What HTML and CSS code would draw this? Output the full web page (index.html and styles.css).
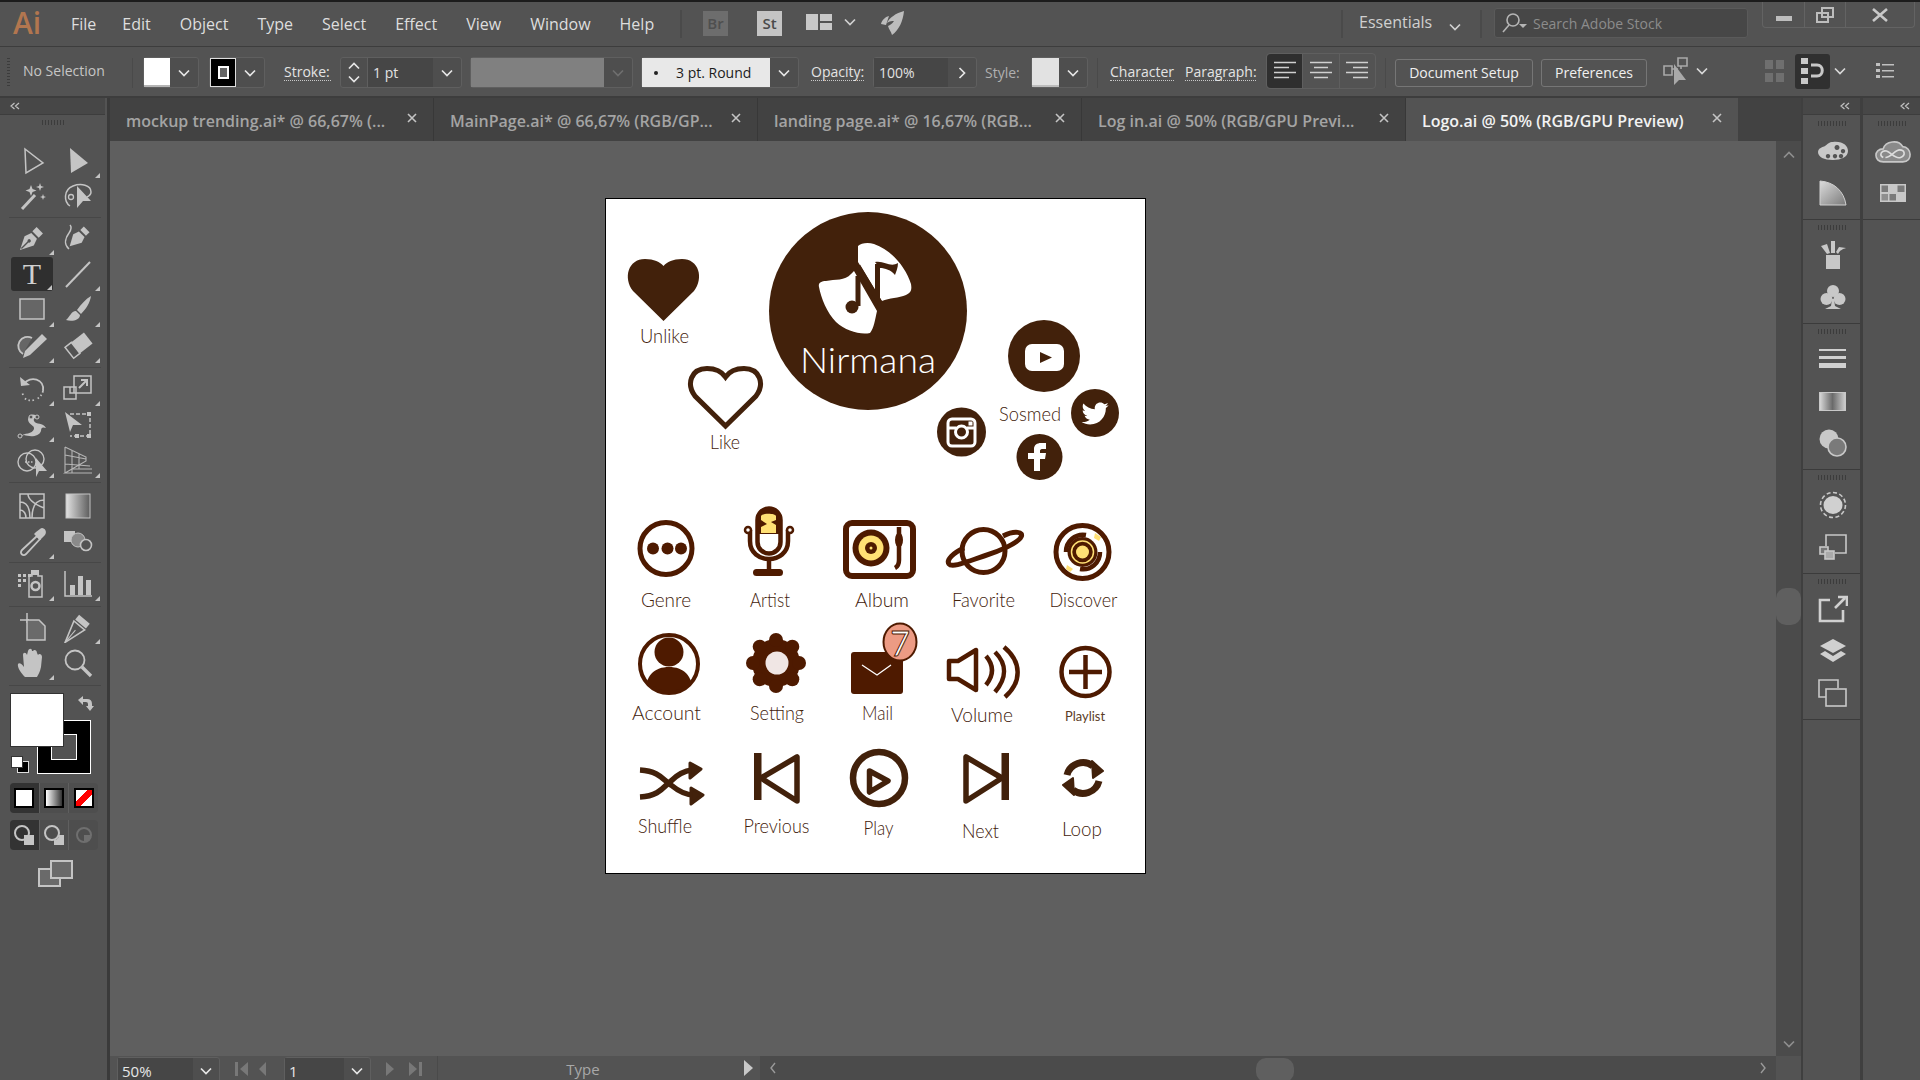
FILE: index.html

```html
<!DOCTYPE html>
<html>
  <head>
    <title>Adobe Illustrator - Logo.ai</title>
    <link rel="stylesheet" href="styles.css">
  </head>
  <body>
    <svg class="sprite">
      <symbol id="chev" viewBox="0 0 12 8"><polyline points="1,1.5 6,6.5 11,1.5" fill="none" stroke="currentColor" stroke-width="1.7"/></symbol>
      <symbol id="dbl" viewBox="0 0 10 8"><path d="M4.5 1 L1 4 L4.5 7 M9 1 L5.500 4 L9 7" fill="none" stroke="currentColor" stroke-width="1.2"/></symbol>
      <symbol id="close" viewBox="0 0 10 10"><path d="M1 1 L9 9 M9 1 L1 9" stroke="currentColor" stroke-width="1.6"/></symbol>
    </svg>

    <div class="topline"></div>

    <div class="menubar">
      <span class="ai-logo">Ai</span>
      <nav class="menu">
        <span>File</span><span>Edit</span><span>Object</span><span>Type</span><span>Select</span><span>Effect</span><span>View</span><span>Window</span><span>Help</span>
      </nav>
      <div class="vsep sep-a"></div>
      <span class="app-box br-box">Br</span>
      <span class="app-box st-box">St</span>
      <svg class="arrange-ic" width="26" height="16" viewBox="0 0 26 16"><path d="M0 0H12V16H0Z M14 0H26V7H14Z M14 9H26V16H14Z" fill="#c8c8c8"/></svg>
      <svg class="menu-chev" width="12" height="8"><use href="#chev"/></svg>
      <svg class="feather-ic" width="26" height="26" viewBox="0 0 26 26"><path d="M24 1 C16 3 9 8 7 13 C10 11 12 11 14 11 C12 14 10 15 8 16 C9 20 11 21 12 25 C19 20 23 11 24 1Z M6 15 L1 14 C2 10 5 7 9 6Z" fill="#bdbdbd"/></svg>
      <div class="vsep sep-b"></div>
      <span class="workspace-name">Essentials</span>
      <svg class="ws-chev" width="12" height="8"><use href="#chev"/></svg>
      <div class="vsep sep-c"></div>
      <div class="stock-search">
        <svg width="26" height="22" viewBox="0 0 26 22"><circle cx="11" cy="8" r="6" fill="none" stroke="#b5b5b5" stroke-width="1.6"/><path d="M7 13 L1 20" stroke="#b5b5b5" stroke-width="1.6"/><path d="M17 12H25L21 16Z" fill="#b5b5b5"/></svg>
        <span>Search Adobe Stock</span>
      </div>
      <div class="win-btns">
        <div class="win-btn"><svg class="win-min" width="16" height="6"><rect width="16" height="5" fill="#bdbdbd"/></svg></div>
        <div class="win-btn"><svg width="18" height="16" viewBox="0 0 18 16"><path d="M6 1H17V10H12V15H1V6H6Z M6 6H12V10H6Z" fill="none" stroke="#bdbdbd" stroke-width="2"/></svg></div>
        <div class="win-btn win-close"><svg width="16" height="14" viewBox="0 0 16 14"><path d="M1 1 L15 13 M15 1 L1 13" stroke="#c8c8c8" stroke-width="2.6"/></svg></div>
      </div>
    </div>

    <div class="controlbar">
      <div class="grip-v"></div>
      <span class="c-text no-sel">No Selection</span>
      <div class="vsep sep-1"></div>

      <div class="combo c-fill">
        <div class="swatch white"></div>
        <div class="chev-btn"><svg width="12" height="8"><use href="#chev"/></svg></div>
      </div>
      <div class="combo c-stroke">
        <div class="swatch black"><span class="stroke-mark"></span></div>
        <div class="chev-btn"><svg width="12" height="8"><use href="#chev"/></svg></div>
      </div>
      <span class="c-label l-stroke">Stroke:</span>
      <div class="combo c-weight">
        <div class="stepper"><svg width="12" height="8" class="flip"><use href="#chev"/></svg><svg width="12" height="8"><use href="#chev"/></svg></div>
        <div class="field">1 pt</div>
        <div class="chev-btn"><svg width="12" height="8"><use href="#chev"/></svg></div>
      </div>
      <div class="combo c-dash">
        <div class="swatch dash"></div>
        <div class="chev-btn dim"><svg width="12" height="8"><use href="#chev"/></svg></div>
      </div>
      <div class="combo c-cap">
        <div class="swatch cap"><span class="cap-dot"></span>3 pt. Round</div>
        <div class="chev-btn"><svg width="12" height="8"><use href="#chev"/></svg></div>
      </div>
      <span class="c-label l-opacity">Opacity:</span>
      <div class="combo c-opacity">
        <div class="field">100%</div>
        <div class="chev-btn"><svg width="8" height="12" viewBox="0 0 8 12"><polyline points="1.500,1 6.500,6 1.500,11" fill="none" stroke="currentColor" stroke-width="1.700"/></svg></div>
      </div>
      <span class="c-plain l-style">Style:</span>
      <div class="combo c-style">
        <div class="swatch style"></div>
        <div class="chev-btn"><svg width="12" height="8"><use href="#chev"/></svg></div>
      </div>
      <div class="vsep sep-2"></div>
      <span class="c-label l-char">Character</span>
      <span class="c-label l-para">Paragraph:</span>
      <div class="align-group">
        <div class="align-btn on"><svg width="24" height="20" viewBox="0 0 24 20"><path d="M1 1.500H23 M1 6.500H16 M1 11.500H23 M1 16.500H16" stroke="#d0d0d0" stroke-width="1.600"/></svg></div>
        <div class="align-btn"><svg width="24" height="20" viewBox="0 0 24 20"><path d="M1 1.500H23 M5 6.500H19 M1 11.500H23 M5 16.500H19" stroke="#d0d0d0" stroke-width="1.600"/></svg></div>
        <div class="align-btn"><svg width="24" height="20" viewBox="0 0 24 20"><path d="M1 1.500H23 M8 6.500H23 M1 11.500H23 M8 16.500H23" stroke="#d0d0d0" stroke-width="1.600"/></svg></div>
      </div>
      <div class="vsep sep-3"></div>
      <div class="text-btn b-doc">Document Setup</div>
      <div class="text-btn b-pref">Preferences</div>
      <svg class="isolate-ic" width="26" height="32" viewBox="0 0 26 32"><path d="M1 11H9V20H1Z M15 3H24V11H15Z M9 14H15 M18 11V14" fill="none" stroke="#a9a9a9" stroke-width="1.600"/><path d="M11 9 L11 30 L16 25 L23 25Z" fill="#a9a9a9"/></svg>
      <svg class="iso-chev" width="12" height="8"><use href="#chev"/></svg>
      <svg class="grid-ic" width="19" height="22" viewBox="0 0 19 22"><path d="M0 0H8V9H0Z M11 0H19V9H11Z M0 13H8V22H0Z M11 13H19V22H11Z" fill="#6f6f6f"/></svg>
      <div class="snap-btn"><svg width="24" height="26" viewBox="0 0 24 26"><path d="M0 0H7V6H0Z M0 10H7V16H0Z M0 20H7V26H0Z" fill="#c8c8c8"/><path d="M10 7H16C23 7 23 18 16 18H10" fill="none" stroke="#c8c8c8" stroke-width="3"/></svg></div>
      <svg class="snap-chev" width="12" height="8"><use href="#chev"/></svg>
      <svg class="list-ic" width="18" height="16" viewBox="0 0 18 16"><path d="M0 0H4V3H0Z M0 6H4V9H0Z M0 12H4V15H0Z M6 1H18V2.500H6Z M6 7H18V8.500H6Z M6 13H18V14.500H6Z" fill="#c0c0c0"/></svg>
    </div>

    <div class="workspace">
      <aside class="toolbar">
        <div class="dock-head"><svg width="10" height="8"><use href="#dbl"/></svg></div>
        <div class="grip"></div>

        <div class="tgroup g1">
          <div class="tool"><svg class="ic" width="32" height="32"><path d="M9 3 L27 17 L10 27Z" fill="none" stroke="#c4c4c4" stroke-width="1.500"/></svg></div>
          <div class="tool more"><svg class="ic" width="32" height="32"><path d="M8 2 L26 17 L9 27Z"/></svg></div>
          <div class="tool"><svg class="ic" width="32" height="32"><path d="M6 28 L19 14" stroke="#c4c4c4" stroke-width="3"/><path d="M15 4 L16.500 8 L20.500 9.500 L16.500 11 L15 15 L13.500 11 L9.500 9.500 L13.500 8Z M24 2 L25 5 L28 6 L25 7 L24 10 L23 7 L20 6 L23 5Z M27 13 L27.800 15.200 L30 16 L27.800 16.800 L27 19 L26.200 16.800 L24 16 L26.200 15.200Z"/></svg></div>
          <div class="tool"><svg class="ic" width="32" height="32"><path d="M8 25 C2 21 1 9 11 5 C19 2 29 4 29 11 C29 13 27 15 25 16" fill="none" stroke="#c4c4c4" stroke-width="1.500"/><circle cx="9" cy="16" r="2.500" fill="none" stroke="#c4c4c4" stroke-width="1.300"/><path d="M15 5 L29 20 L21 20 L15 27Z"/></svg></div>
        </div>

        <div class="tgroup g2">
          <div class="tool more"><svg class="ic" width="32" height="32"><g transform="rotate(45 16 16)"><path d="M16 33 L9.500 20 L12 13 H20 L22.500 20 Z"/><rect x="11.500" y="5" width="9" height="6"/><path d="M16 31 V21" stroke="#535353" stroke-width="1.400"/><circle cx="16" cy="20" r="1.700" fill="#535353"/></g></svg></div>
          <div class="tool"><svg class="ic" width="32" height="32"><g transform="rotate(45 19 13)"><path d="M19 29 L13 18 L15 12 H23 L25 18 Z"/><rect x="15" y="5" width="8" height="5"/></g><path d="M7 27 C1 22 4 15 7 11 C9 8 10 5 8 3" fill="none" stroke="#c4c4c4" stroke-width="1.500"/></svg></div>
          <div class="tool more active"><span class="type-t">T</span></div>
          <div class="tool more"><svg class="ic" width="32" height="32"><path d="M4 29 L28 4" stroke="#c4c4c4" stroke-width="2"/></svg></div>
          <div class="tool more"><svg class="ic" width="32" height="32"><rect x="4" y="5" width="24" height="20" fill="#666" stroke="#c4c4c4" stroke-width="1.500"/></svg></div>
          <div class="tool more"><svg class="ic" width="32" height="32"><path d="M29 2 C24 5 19 10 15 16 L19 20 C24 15 28 9 29 2Z M14 17 C9 17 8 23 4 26 C10 28 18 26 18 21Z"/></svg></div>
          <div class="tool more"><svg class="ic" width="32" height="32"><path d="M16 8 A9 9 0 1 0 7 24" fill="#666" stroke="#c4c4c4" stroke-width="1.800"/><path d="M26 4 L31 9 L14 25 L7 28 L9 21Z"/></svg></div>
          <div class="tool more"><svg class="ic" width="32" height="32"><g transform="rotate(-38 16 16)"><rect x="5" y="9" width="24" height="14"/><rect x="5" y="9" width="8" height="14" fill="#535353" stroke="#c4c4c4" stroke-width="1.500"/></g></svg></div>
        </div>

        <div class="tgroup g3">
          <div class="tool more"><svg class="ic" width="32" height="32"><path d="M8 11 C14 2 29 6 27 18" fill="none" stroke="#c4c4c4" stroke-width="1.800"/><path d="M27 18 C26 22 24 24 21 26 M18 27 C14 28 11 27 8 25 M7 22 L6 19" fill="none" stroke="#c4c4c4" stroke-width="1.800" stroke-dasharray="1.500 2.500"/><path d="M4 4 L5 13 L14 12Z"/></svg></div>
          <div class="tool more"><svg class="ic" width="32" height="32"><path d="M12 3H29V20H12Z M2 14H14V26H2Z M8 14V20H14" fill="none" stroke="#c4c4c4" stroke-width="1.500"/><path d="M17 15 L24 8 M19 7H25V13" fill="none" stroke="#c4c4c4" stroke-width="2"/></svg></div>
          <div class="tool more"><svg class="ic" width="32" height="32"><path d="M3 28 C9 23 16 26 18 20 C19 16 12 16 12 10 C13 5 18 4 22 8 C20 8 17 9 18 12 C20 16 27 13 30 19 C27 18 25 18 25 22 C23 28 14 28 8 26Z"/><circle cx="4" cy="27" r="2" fill="#535353" stroke="#c4c4c4"/><circle cx="15" cy="8" r="2" fill="#535353" stroke="#c4c4c4"/><circle cx="21" cy="8" r="2" fill="#535353" stroke="#c4c4c4"/></svg></div>
          <div class="tool"><svg class="ic" width="32" height="32"><path d="M8 5H28V27H8" fill="none" stroke="#c4c4c4" stroke-width="1.500" stroke-dasharray="4 2"/><path d="M3 3 L20 16 L11 16 L8 23 Z"/><rect x="25" y="3" width="4" height="4"/><rect x="25" y="25" width="4" height="4"/><rect x="13" y="25" width="4" height="4"/></svg></div>
          <div class="tool more"><svg class="ic" width="32" height="32"><circle cx="11" cy="17" r="9" fill="none" stroke="#c4c4c4" stroke-width="1.400"/><circle cx="19" cy="14" r="9" fill="none" stroke="#c4c4c4" stroke-width="1.400"/><path d="M9 17H17" stroke="#c4c4c4" stroke-width="1.400" stroke-dasharray="1.500 1.500"/><path d="M20 13 L31 26 L23 26 L20 32Z"/></svg></div>
          <div class="tool more"><svg class="ic" width="32" height="32"><path d="M3 2 L24 12 V16 L3 28 H30 M3 2V28 M3 10 L24 14 M3 19 L28 21 M10 5 V28 M17 9 V24 M10 24H30" fill="none" stroke="#b5b5b5" stroke-width="1.100"/></svg></div>
        </div>

        <div class="tgroup g4">
          <div class="tool"><svg class="ic" width="32" height="32"><path d="M4 4H28V28H4Z M4 12 C12 12 14 20 14 28 M28 10 C20 10 16 16 16 28 M12 4 C12 10 18 14 28 18 M4 20 C8 20 10 24 10 28" fill="none" stroke="#c4c4c4" stroke-width="1.500"/></svg></div>
          <div class="tool"><svg class="ic" width="32" height="32"><defs><linearGradient id="gTool"><stop offset="0" stop-color="#e2e2e2"/><stop offset="1" stop-color="#5c5c5c"/></linearGradient></defs><rect x="4" y="4" width="24" height="24" fill="url(#gTool)" stroke="#c4c4c4" stroke-width="1"/></svg></div>
          <div class="tool more"><svg class="ic" width="32" height="32"><path d="M21 10 L6 24 C3 27 7 31 10 28 L24 13Z" fill="none" stroke="#c4c4c4" stroke-width="1.800"/><path d="M20 6 L26 12 L29 9 C32 5 27 0 24 3Z M18 8 L24 14 L26 12 L20 6Z"/></svg></div>
          <div class="tool"><svg class="ic" width="32" height="32"><rect x="2" y="5" width="11" height="11"/><circle cx="16" cy="14" r="7" fill="#8a8a8a" stroke="#c4c4c4"/><circle cx="24" cy="19" r="5.500" fill="#535353" stroke="#c4c4c4" stroke-width="1.600"/></svg></div>
        </div>

        <div class="tgroup g5">
          <div class="tool more"><svg class="ic" width="32" height="32"><path d="M2 6H5V9H2Z M7 6H10V9H7Z M12 6H15V9H12Z M2 11H5V14H2Z M7 11H10V14H7Z M2 16H5V19H2Z"/><path d="M16 3H22V8H26V29H13V8H16Z" fill="none" stroke="#c4c4c4" stroke-width="1.500"/><rect x="15" y="2" width="8" height="5"/><circle cx="19.500" cy="18" r="4" fill="none" stroke="#c4c4c4" stroke-width="2.500"/></svg></div>
          <div class="tool more"><svg class="ic" width="32" height="32"><path d="M3 3V28H30" fill="none" stroke="#c4c4c4" stroke-width="1.500"/><path d="M8 17H13V27H8Z M16 8H21V27H16Z M24 12H29V27H24Z"/></svg></div>
        </div>

        <div class="tgroup g6">
          <div class="tool"><svg class="ic" width="32" height="32"><path d="M4 9H13 M11 2V12" stroke="#c4c4c4" stroke-width="1.500"/><path d="M11 9H23L29 15V29H11Z" fill="#6a6a6a" stroke="#c4c4c4" stroke-width="1.500"/></svg></div>
          <div class="tool more"><svg class="ic" width="32" height="32"><g transform="rotate(40 16 16)"><path d="M16 36 L9 14 H23Z" fill="none" stroke="#c4c4c4" stroke-width="1.600"/><path d="M9 6H23V12H9Z"/><path d="M16 36V20" stroke="#c4c4c4"/></g></svg></div>
          <div class="tool more"><svg class="ic" width="32" height="32"><path d="M9 30 C5 26 1 20 2 17 C3 15 6 17 8 20 L7 8 C7 5 10 5 11 8 L12 4 C13 1 16 1 16 4 L17 4 C18 2 21 3 21 6 L22 8 C23 6 26 7 26 10 L25 20 C24 25 22 28 21 30Z"/></svg></div>
          <div class="tool"><svg class="ic" width="32" height="32"><circle cx="13" cy="13" r="9.500" fill="none" stroke="#c4c4c4" stroke-width="1.800"/><path d="M20 20 L29 29" stroke="#c4c4c4" stroke-width="3.400"/></svg></div>
        </div>

        <div class="colors">
          <div class="stroke-big"><span></span></div>
          <div class="fill-big"></div>
          <svg class="swap-ic" width="17" height="17" viewBox="0 0 17 17"><path d="M1 5 L6 1 V4 H10 Q15 4 15 9 V11 H17 L13 16 L9 11 H11 V9 Q11 7 9 7 H6 V10Z" fill="#c4c4c4"/></svg>
          <div class="default-ic"><span></span><span></span></div>
        </div>

        <div class="mode-row">
          <div class="mode on"><span class="mode-sw solid"></span></div>
          <div class="mode"><span class="mode-sw grad"></span></div>
          <div class="mode"><span class="mode-sw none"></span></div>
        </div>
        <div class="mode-row">
          <div class="mode on"><svg width="22" height="22" viewBox="0 0 22 22"><circle cx="9" cy="9" r="7" fill="none" stroke="#c4c4c4" stroke-width="2"/><rect x="11" y="11" width="10" height="10" fill="#c4c4c4"/></svg></div>
          <div class="mode"><svg width="22" height="22" viewBox="0 0 22 22"><circle cx="9" cy="9" r="7" fill="none" stroke="#c4c4c4" stroke-width="2"/><path d="M21 11V21H11V16C14 16 16 14 16 11Z" fill="#c4c4c4"/></svg></div>
          <div class="mode"><svg width="22" height="22" viewBox="0 0 22 22"><circle cx="11" cy="11" r="7" fill="none" stroke="#6f6f6f" stroke-width="2"/><path d="M11 11H18A7 7 0 0 1 11 18Z" fill="#6f6f6f"/></svg></div>
        </div>
        <div class="screen-mode"><svg width="35" height="27" viewBox="0 0 35 27"><rect x="1" y="9" width="21" height="17" fill="#6a6a6a" stroke="#c4c4c4" stroke-width="2"/><rect x="13" y="1" width="21" height="17" fill="#6a6a6a" stroke="#c4c4c4" stroke-width="2"/></svg></div>
      </aside>

      <main class="docarea">
        <div class="tabs">
          <div class="tab"><span class="tab-name">mockup trending.ai* @ 66,67% (...</span><svg width="10" height="10"><use href="#close"/></svg></div>
          <div class="tab"><span class="tab-name">MainPage.ai* @ 66,67% (RGB/GP...</span><svg width="10" height="10"><use href="#close"/></svg></div>
          <div class="tab"><span class="tab-name">landing page.ai* @ 16,67% (RGB...</span><svg width="10" height="10"><use href="#close"/></svg></div>
          <div class="tab"><span class="tab-name">Log in.ai @ 50% (RGB/GPU Previ...</span><svg width="10" height="10"><use href="#close"/></svg></div>
          <div class="tab current"><span class="tab-name">Logo.ai @ 50% (RGB/GPU Preview)</span><svg width="10" height="10"><use href="#close"/></svg></div>
        </div>

        <div class="canvas-row">
          <div class="canvas">
            <svg class="artboard" width="541" height="676" viewBox="605 198 541 676">
              <!-- top: hearts and logo -->
              <g class="brown">
                <path d="M663.500 321 L633 291 C623 278 628 259 645 259 C654 259 660 262 663.500 266 C667 262 673 259 682 259 C699 259 704 278 694 291Z"/>
                <circle cx="868" cy="311" r="99"/>
                <circle cx="1044" cy="356" r="36"/>
                <circle cx="961.500" cy="432" r="24.500"/>
                <circle cx="1095" cy="413" r="24"/>
                <circle cx="1039.500" cy="457" r="23"/>
              </g>
              <path d="M725.500 426 L695 396 C686 384 691 368.500 707 368.500 C716 368.500 722 372 725.500 377 C729 372 735 368.500 744 368.500 C760 368.500 765 384 756 396Z" fill="none" stroke="#42210b" stroke-width="5"/>

              <path d="M858 246 C861 243 868 242 874 244 C892 250 906 268 911 284 C912 290 911 293 906 295 C899 298 889 298 882 301 L858 262Z M819 287 C818 283 821 281 826 281 C835 279 845 281 851 274 L854 271 L877 311 C875 320 874 328 870 333 C860 335 846 331 836 322 C827 313 821 298 819 287Z" fill="#fff"/>
              <path d="M858 266 L880 303 M858 276 V306 M877.500 300 V264" fill="none" stroke="#42210b" stroke-width="5"/>
              <path d="M875 262 C884 260 890 268 898 263 C898 268 896 272 895 275 C891 270 885 268 880 268Z" fill="#42210b"/>
              <circle cx="852" cy="307" r="6.500" fill="#42210b"/>
              <text class="logo-name" x="800" y="373" textLength="136" lengthAdjust="spacingAndGlyphs">Nirmana</text>

              <text class="lbl" x="640" y="343" textLength="49" lengthAdjust="spacingAndGlyphs">Unlike</text>
              <text class="lbl" x="710" y="449" textLength="30" lengthAdjust="spacingAndGlyphs">Like</text>
              <text class="lbl" x="999" y="421" textLength="62" lengthAdjust="spacingAndGlyphs">Sosmed</text>

              <!-- social icons -->
              <rect x="1025" y="344" width="39" height="27" rx="7" fill="#fff"/>
              <path d="M1040 352 L1052 357.500 L1040 363Z" fill="#42210b"/>
              <rect x="948" y="419" width="27" height="27" rx="4" fill="none" stroke="#fff" stroke-width="3"/>
              <path d="M948 428 H956 M967 428 H975" stroke="#fff" stroke-width="3"/>
              <circle cx="961.500" cy="432" r="6" fill="none" stroke="#fff" stroke-width="3"/>
              <rect x="968.500" y="421.500" width="4" height="4" fill="#fff"/>
              <path transform="translate(1081.600 400) scale(1.125)" fill="#fff" d="M23.954 4.569c-.885.389-1.830.654-2.825.775 1.014-.611 1.794-1.574 2.163-2.723-.951.555-2.005.959-3.127 1.184-.896-.959-2.173-1.559-3.591-1.559-2.717 0-4.920 2.203-4.920 4.917 0 .39.045.765.127 1.124C7.691 8.094 4.066 6.130 1.640 3.161c-.427.722-.666 1.561-.666 2.475 0 1.710.870 3.213 2.188 4.096-.807-.026-1.566-.248-2.228-.616v.061c0 2.385 1.693 4.374 3.946 4.827-.413.111-.849.171-1.296.171-.314 0-.615-.030-.916-.086.631 1.953 2.445 3.377 4.604 3.417-1.680 1.319-3.809 2.105-6.102 2.105-.390 0-.779-.023-1.170-.067 2.189 1.394 4.768 2.209 7.557 2.209 9.054 0 13.999-7.496 13.999-13.986 0-.209 0-.420-.015-.630.961-.689 1.800-1.560 2.460-2.548l-.047-.020z"/>
              <path d="M1034 471 V459 H1028 V453 H1034 V449 C1034 445 1037 443 1041 443 H1046 V449 H1042 C1040.500 449 1040 450 1040 451 V453 H1046 L1045 459 H1040 V471Z" fill="#fff"/>

              <!-- row 1 -->
              <g class="dark-stroke">
                <circle cx="666" cy="548.500" r="26"/>
                <rect x="846" y="523" width="67" height="53" rx="6" stroke-width="6"/>
                <circle cx="983.500" cy="551" r="21.500"/>
                <path d="M1003 536 C1015 530 1024 532 1021 537 C1018 543 1000 551 984 556 C966 562 952 568 949 564 C946 560 953 553 964 548" fill="none"/>
                <circle cx="1082.500" cy="552" r="26.500"/>
              </g>
              <g class="dark-fill">
                <circle cx="653" cy="548.500" r="6"/>
                <circle cx="667.500" cy="548.500" r="6"/>
                <circle cx="681" cy="548.500" r="6"/>
              </g>

              <!-- artist mic -->
              <rect x="757.500" y="508.500" width="23" height="45" rx="11.500" class="dark-line"/>
              <path d="M757 520 A12 12 0 0 1 781 520 V534 H757Z" fill="#4e1a00"/>
              <path d="M761 516 C762 513 775 513 776 516 V520 L771 522 L776 525 V533 H761 V527 L767 524 L761 520Z" fill="#ffe074"/>
              <path d="M750 530 V541 C750 565 788 565 788 541 V530" class="dark-line"/>
              <circle cx="748" cy="530" r="3" class="dark-thin"/>
              <circle cx="790" cy="530" r="3" class="dark-thin"/>
              <path d="M769 559 V572" class="dark-line"/>
              <rect x="753" y="569" width="30" height="7" rx="3.500" fill="#4e1a00"/>

              <!-- album -->
              <circle cx="871" cy="548" r="18.500" fill="#4e1a00"/>
              <circle cx="871" cy="548" r="12.500" fill="#ffe074"/>
              <circle cx="871" cy="548" r="6" fill="#4e1a00"/>
              <circle cx="871" cy="548" r="1.500" fill="#ffe074"/>
              <path d="M899 527 V560 Q899 566 895 568" class="dark-line"/>
              <ellipse cx="899" cy="540" rx="4" ry="7.500" fill="#4e1a00"/>

              <!-- discover -->
              <path d="M1066 552 A17 17 0 0 1 1086 535 M1100 552 A17 17 0 0 1 1080 569" class="dark-line"/>
              <circle cx="1082.500" cy="552" r="15" fill="#4e1a00"/>
              <circle cx="1082.500" cy="552" r="11" fill="#4e1a00" stroke="#ffe074" stroke-width="1.500"/>
              <circle cx="1082.500" cy="552" r="6.500" fill="#ffe074"/>
              <path d="M1095 533 L1101 537 L1099 541 L1094 538Z M1067 565 L1073 569 L1070 572 L1066 569Z" fill="#ffe074"/>

              <text class="lbl" x="641" y="607" textLength="50" lengthAdjust="spacingAndGlyphs">Genre</text>
              <text class="lbl" x="750" y="607" textLength="40" lengthAdjust="spacingAndGlyphs">Artist</text>
              <text class="lbl" x="855" y="607" textLength="54" lengthAdjust="spacingAndGlyphs">Album</text>
              <text class="lbl" x="952" y="607" textLength="63" lengthAdjust="spacingAndGlyphs">Favorite</text>
              <text class="lbl" x="1049.500" y="607" textLength="68" lengthAdjust="spacingAndGlyphs">Discover</text>

              <!-- row 2 -->
              <clipPath id="ringClip"><circle cx="669" cy="664" r="30"/></clipPath>
              <g clip-path="url(#ringClip)" class="dark-fill">
                <circle cx="669" cy="652" r="14.500"/>
                <path d="M645 698 C644 676 654 667 669 667 C684 667 694 676 693 698Z"/>
              </g>
              <circle cx="669" cy="664" r="29" fill="none" stroke="#4e1a00" stroke-width="4"/>

              <g class="dark-fill">
                <circle cx="776" cy="663" r="24"/>
                <circle cx="776" cy="640" r="7"/>
                <circle cx="776" cy="686" r="7"/>
                <circle cx="753" cy="663" r="7"/>
                <circle cx="799" cy="663" r="7"/>
                <circle cx="759.700" cy="646.700" r="7"/>
                <circle cx="792.300" cy="646.700" r="7"/>
                <circle cx="759.700" cy="679.300" r="7"/>
                <circle cx="792.300" cy="679.300" r="7"/>
              </g>
              <circle cx="777" cy="663" r="11.500" fill="#f0e6e4"/>

              <rect x="851" y="652" width="52" height="42" rx="3" fill="#4e1a00"/>
              <path d="M862 665 L877 675 L891 665" fill="none" stroke="#fff" stroke-width="1.300"/>
              <ellipse cx="900" cy="642" rx="16.500" ry="18.500" fill="#ec9b84" stroke="#4e1a00" stroke-width="2"/>
              <text class="badge-num" x="900" y="656">7</text>

              <path d="M949 661 H958 L976 650 V690 L958 679 H949Z" class="dark-line-w"/>
              <path d="M986 656 Q998 670 986 685 M995 652 C1007 664 1007 678 995 692 M1004 647 C1022 662 1022 682 1005 697" class="dark-line-w"/>

              <circle cx="1085.500" cy="672" r="24" class="dark-line"/>
              <path d="M1085.500 655 V689 M1069 672 H1102" class="dark-line"/>

              <text class="lbl" x="632" y="720" textLength="69" lengthAdjust="spacingAndGlyphs">Account</text>
              <text class="lbl" x="750" y="720" textLength="54" lengthAdjust="spacingAndGlyphs">Setting</text>
              <text class="lbl" x="862" y="720" textLength="31" lengthAdjust="spacingAndGlyphs">Mail</text>
              <text class="lbl" x="951" y="722" textLength="62" lengthAdjust="spacingAndGlyphs">Volume</text>
              <text class="lbl-small" x="1065" y="721" textLength="40" lengthAdjust="spacingAndGlyphs">Playlist</text>

              <!-- row 3 -->
              <g class="brown-line">
                <path d="M640 770 C660 771 664 781 671 785 C677 790 684 795 694 795"/>
                <path d="M640 797 C660 796 664 786 671 781 C677 775 683 771 692 770"/>
                <path d="M761 778 L797 757 V801Z"/>
                <circle cx="879" cy="778" r="26"/>
                <path d="M869.500 771 L888 781 L869.500 792Z"/>
                <path d="M1002 778 L966 757 V801Z"/>
                <path class="loop-arc" d="M1067 775 A16.500 16.500 0 0 1 1093 766"/>
                <path class="loop-arc" d="M1099 781 A16.500 16.500 0 0 1 1073 790"/>
              </g>
              <g class="brown">
                <path d="M690 763 L701 769 L690 778Z M691 788 L703 795 L691 804Z" stroke="#42210b" stroke-width="3" stroke-linejoin="round"/>
                <rect x="754" y="753" width="7.500" height="47"/>
                <rect x="1001.500" y="753" width="7.500" height="47"/>
                <path d="M1092 761 L1103 771 L1093 778Z M1074 795 L1063 785 L1073 778Z" stroke="#42210b" stroke-width="2" stroke-linejoin="round"/>
              </g>

              <text class="lbl" x="638" y="833" textLength="54" lengthAdjust="spacingAndGlyphs">Shuffle</text>
              <text class="lbl" x="743.500" y="833" textLength="66" lengthAdjust="spacingAndGlyphs">Previous</text>
              <text class="lbl" x="863.500" y="835" textLength="30" lengthAdjust="spacingAndGlyphs">Play</text>
              <text class="lbl" x="962" y="838" textLength="37" lengthAdjust="spacingAndGlyphs">Next</text>
              <text class="lbl" x="1062" y="836" textLength="40" lengthAdjust="spacingAndGlyphs">Loop</text>
            </svg>
          </div>
          <div class="vscroll">
            <svg width="12" height="8" class="flip"><use href="#chev"/></svg>
            <div class="vthumb"></div>
            <svg width="12" height="8" class="vdown"><use href="#chev"/></svg>
          </div>
        </div>

        <div class="statusbar">
          <div class="st-left">
            <div class="st-field st-zoom"><span>50%</span><svg width="12" height="8"><use href="#chev"/></svg></div>
            <svg class="st-nav" width="62" height="16" viewBox="0 0 62 16"><path d="M0 1H3V15H0Z M13 1V15L5 8Z M31 1V15L24 8Z" fill="#787878"/></svg>
            <div class="st-field st-page"><span>1</span><svg width="12" height="8"><use href="#chev"/></svg></div>
            <svg class="st-nav-r" width="38" height="16" viewBox="0 0 38 16"><path d="M0 1V15L8 8Z M23 1V15L31 8Z M33 1H36V15H33Z" fill="#787878"/></svg>
            <div class="st-info"><span>Type</span></div>
            <svg class="st-play" width="9" height="16" viewBox="0 0 9 16"><path d="M0 0V16L9 8Z" fill="#c8c8c8"/></svg>
          </div>
          <div class="hscroll">
            <svg width="6" height="12" viewBox="0 0 6 12"><polyline points="5,1 1,6 5,11" fill="none" stroke="#9a9a9a" stroke-width="1.400"/></svg>
            <div class="hthumb"></div>
            <svg width="6" height="12" viewBox="0 0 6 12"><polyline points="1,1 5,6 1,11" fill="none" stroke="#9a9a9a" stroke-width="1.400"/></svg>
          </div>
          <div class="st-corner"></div>
        </div>
      </main>

      <aside class="dock">
        <div class="dock-col">
          <div class="dock-head"><svg width="10" height="8"><use href="#dbl"/></svg></div>
          <div class="pgroup">
            <div class="pgrip"></div>
            <div class="panel-ic"><svg width="32" height="24" viewBox="0 0 32 24"><path fill-rule="evenodd" d="M16 3 C26 2 31 7 31 12 C31 18 24 21 16 21 C7 21 1 18 1 13 C1 9 6 8 8 7 C11 5 12 3 16 3Z M20 6a2.500 2.500 0 1 0 .01 0Z M26 10a2.200 2.200 0 1 0 .01 0Z M24 15a2.200 2.200 0 1 0 .01 0Z M18 15a2.200 2.200 0 1 0 .01 0Z M11 15a2.200 2.200 0 1 0 .01 0Z" fill="#c8c8c8"/></svg></div>
            <div class="panel-ic"><svg width="28" height="26" viewBox="0 0 28 26"><defs><linearGradient id="pie" x1="0" y1="0" x2="1" y2="1"><stop offset="0" stop-color="#dcdcdc"/><stop offset="1" stop-color="#7a7a7a"/></linearGradient></defs><path d="M1 1 C15 2 25 11 27 25 H1Z" fill="url(#pie)" stroke="#d0d0d0"/></svg></div>
          </div>
          <div class="pgroup">
            <div class="pgrip"></div>
            <div class="panel-ic"><svg width="28" height="30" viewBox="0 0 28 30"><path d="M7 15H21V29H7Z M2 6 L8 4 L11 13 L8 14Z M12 1H16V13H12Z M17 12 L20 7 L27 8 C24 9 21 10 19 14Z" fill="#c8c8c8"/></svg></div>
            <div class="panel-ic"><svg width="26" height="26" viewBox="0 0 26 26"><circle cx="13" cy="7" r="6" fill="#c8c8c8"/><circle cx="6.500" cy="15" r="6" fill="#c8c8c8"/><circle cx="19.500" cy="15" r="6" fill="#c8c8c8"/><path d="M12 15H14L15 22 L21 25H5L11 22Z" fill="#c8c8c8"/></svg></div>
          </div>
          <div class="pgroup">
            <div class="pgrip"></div>
            <div class="panel-ic"><svg width="27" height="20" viewBox="0 0 27 20"><path d="M0 0H27V2H0Z M0 7H27V10H0Z M0 14H27V19H0Z" fill="#d0d0d0"/></svg></div>
            <div class="panel-ic"><svg width="27" height="19" viewBox="0 0 27 19"><defs><linearGradient id="gPanel"><stop offset="0" stop-color="#dadada"/><stop offset=".5" stop-color="#6a6a6a"/><stop offset="1" stop-color="#d0d0d0"/></linearGradient></defs><rect x=".5" y=".5" width="26" height="18" fill="url(#gPanel)" stroke="#c8c8c8"/></svg></div>
            <div class="panel-ic"><svg width="28" height="28" viewBox="0 0 28 28"><circle cx="10" cy="10" r="9.500" fill="#c8c8c8"/><circle cx="18" cy="18" r="9" fill="#7a7a7a" stroke="#c8c8c8" stroke-width="1.600"/></svg></div>
          </div>
          <div class="pgroup">
            <div class="pgrip"></div>
            <div class="panel-ic"><svg width="28" height="28" viewBox="0 0 28 28"><ellipse cx="14" cy="14" rx="9.500" ry="9" fill="#d0d0d0"/><circle cx="14" cy="14" r="12.500" fill="none" stroke="#c8c8c8" stroke-width="1.600" stroke-dasharray="4 2.500"/></svg></div>
            <div class="panel-ic"><svg width="28" height="26" viewBox="0 0 28 26"><path d="M7 12V1H27V19H16" fill="none" stroke="#c8c8c8" stroke-width="1.600"/><rect x="1" y="13" width="8" height="7" fill="#777" stroke="#c8c8c8" stroke-width="1.600"/><rect x="6" y="17" width="9" height="8" fill="#aaa" stroke="#c8c8c8" stroke-width="1.600"/></svg></div>
          </div>
          <div class="pgroup">
            <div class="pgrip"></div>
            <div class="panel-ic"><svg width="30" height="28" viewBox="0 0 30 28"><path d="M12 5H2V26H25V15" fill="none" stroke="#d0d0d0" stroke-width="2.600"/><path d="M17 13 L27 3 M20 2H29V11" fill="none" stroke="#d0d0d0" stroke-width="2.600"/></svg></div>
            <div class="panel-ic"><svg width="28" height="26" viewBox="0 0 28 26"><path d="M14 1 L27 8 L14 15 L1 8Z" fill="#d0d0d0"/><path d="M6 13 L1 16 L14 24 L27 16 L22 13 L14 18Z" fill="#d0d0d0"/></svg></div>
            <div class="panel-ic"><svg width="29" height="28" viewBox="0 0 29 28"><path d="M8 18H1V1H20V9" fill="none" stroke="#c8c8c8" stroke-width="1.600"/><rect x="8" y="10" width="20" height="17" fill="none" stroke="#c8c8c8" stroke-width="1.600"/></svg></div>
          </div>
        </div>
        <div class="dock-col col-b">
          <div class="dock-head"><svg width="10" height="8"><use href="#dbl"/></svg></div>
          <div class="pgroup">
            <div class="pgrip"></div>
            <div class="panel-ic"><svg width="38" height="26" viewBox="0 0 34 24"><path d="M8 22 C-1 22 -1 10 8 10 C10 3 22 1 26 8 C34 8 36 22 26 22Z" fill="#8a8a8a" stroke="#c8c8c8" stroke-width="1.500"/><path d="M8 18 C4 16 6 11 11 12 C15 13 19 20 24 18 C29 16 28 11 23 11 C19 11 15 18 10 18" fill="none" stroke="#dcdcdc" stroke-width="1.500"/></svg></div>
            <div class="panel-ic"><svg width="26" height="18" viewBox="0 0 26 18"><rect width="26" height="18" fill="#c8c8c8"/><path d="M1.500 1.500H8V8H1.500Z M17.500 1.500H24.500V8H17.500Z M9.500 10H16V16.500H9.500Z" fill="#7a7a7a"/><path d="M1.500 10H8V16.500H1.500Z" fill="#8e8e8e"/></svg></div>
          </div>
        </div>
      </aside>
    </div>
  </body>
</html>
```

FILE: styles.css

```css
* {
  box-sizing: border-box;
}
html, body {
  margin: 0;
  height: 100%;
}
body {
  width: 1920px;
  height: 1080px;
  overflow: hidden;
  display: flex;
  flex-direction: column;
  background-color: #535353;
  color: #d8d8d8;
  font-family: "Open Sans", "Noto Sans", sans-serif;
}
svg {
  flex: none;
  display: block;
}
.sprite {
  position: absolute;
  width: 0;
  height: 0;
}
.flip {
  transform: rotate(180deg);
}
.topline {
  height: 2px;
  background-color: #1c1c1c;
}
.vsep {
  flex: none;
  width: 2px;
  background-color: #4a4a4a;
}

/* menu bar */
.menubar {
  flex: none;
  height: 45px;
  display: flex;
  align-items: center;
  border-bottom: 1px solid #3d3d3d;
  position: relative;
}
.ai-logo {
  margin-left: 13px;
  width: 30px;
  color: #b2764f;
  font-size: 30px;
  font-weight: 600;
  line-height: 1;
  margin-top: -2px;
}
.menu {
  margin-left: 28px;
  display: flex;
  gap: 29px;
  font-size: 16px;
  color: #dedede;
}
.menu span:first-child {
  margin-right: -3px;
}
.sep-a {
  position: absolute;
  left: 680px;
  top: 8px;
  height: 28px;
}
.app-box {
  position: absolute;
  top: 9px;
  width: 25px;
  height: 25px;
  font-size: 15px;
  font-weight: 600;
  text-align: center;
  line-height: 25px;
}
.br-box {
  left: 703px;
  background-color: #6d6d6d;
  color: #4f4f4f;
}
.st-box {
  left: 757px;
  background-color: #c4c4c4;
  color: #4a4a4a;
}
.arrange-ic {
  position: absolute;
  left: 806px;
  top: 12px;
}
.menu-chev {
  position: absolute;
  left: 844px;
  top: 16px;
  color: #d0d0d0;
}
.feather-ic {
  position: absolute;
  left: 880px;
  top: 8px;
}
.sep-b {
  position: absolute;
  left: 1341px;
  top: 8px;
  height: 28px;
}
.workspace-name {
  position: absolute;
  left: 1359px;
  top: 9px;
  font-size: 16px;
  color: #d0d0d0;
}
.ws-chev {
  position: absolute;
  left: 1449px;
  top: 21px;
  color: #d0d0d0;
}
.sep-c {
  position: absolute;
  left: 1480px;
  top: 8px;
  height: 28px;
}
.stock-search {
  position: absolute;
  left: 1494px;
  top: 6px;
  width: 254px;
  height: 30px;
  padding-left: 7px;
  display: flex;
  align-items: center;
  gap: 5px;
  background-color: #474747;
  border: 1px solid #5a5a5a;
  border-radius: 3px;
  font-size: 14px;
  color: #8c8c8c;
}
.win-btns {
  position: absolute;
  left: 1762px;
  top: 0;
  width: 153px;
  height: 26px;
  display: flex;
  border: 1px solid #636363;
  border-top: none;
  border-radius: 0 0 4px 4px;
}
.win-btn {
  flex: none;
  width: 41px;
  display: flex;
  align-items: center;
  justify-content: center;
  border-left: 1px solid #636363;
}
.win-btn:first-child {
  border-left: none;
}
.win-close {
  flex: 1;
}
.win-min {
  margin-top: 9px;
}

/* control bar */
.controlbar {
  flex: none;
  height: 51px;
  padding: 2px 0 0 7px;
  display: flex;
  align-items: center;
  border-bottom: 2px solid #3d3d3d;
  font-size: 14px;
  color: #dedede;
}
.controlbar .vsep {
  width: 1px;
}
.grip-v {
  flex: none;
  width: 3px;
  height: 30px;
  background: repeating-linear-gradient(to bottom, #3c3c3c 0 1px, transparent 1px 3px);
}
.c-text {
  flex: none;
  color: #c6c6c6;
  white-space: nowrap;
}
.no-sel {
  margin: -4px 0 0 13px;
  width: 82px;
}
.sep-1 { margin-left: 27px; height: 30px; }
.sep-2 { margin-left: 9px; height: 30px; }
.sep-3 { margin-left: 9px; height: 30px; }
.combo {
  flex: none;
  height: 31px;
  display: flex;
  background-color: #4e4e4e;
  border: 1px solid #5f5f5f;
  border-radius: 3px;
}
.swatch {
  flex: 1;
}
.swatch.white {
  background-color: #fff;
  border-bottom: 2px solid #b5b5b5;
}
.swatch.black {
  background-color: #000;
  border: 1px solid #ddd;
  display: flex;
  align-items: center;
  justify-content: center;
}
.stroke-mark {
  width: 11px;
  height: 13px;
  border: 2px solid #fff;
  background-color: #666;
}
.swatch.dash {
  background-color: #808080;
}
.swatch.cap {
  background-color: #e8e8e8;
  color: #1c1c1c;
  line-height: 31px;
  white-space: nowrap;
  display: flex;
  align-items: center;
}
.cap-dot {
  width: 4px;
  height: 4px;
  margin: 0 18px 0 12px;
  border-radius: 50%;
  background-color: #222;
}
.swatch.style {
  background-color: #e2e2e2;
  border-bottom: 2px solid #bdbdbd;
}
.chev-btn {
  flex: none;
  width: 28px;
  display: flex;
  align-items: center;
  justify-content: center;
  color: #e6e6e6;
}
.chev-btn.dim {
  color: #6f6f6f;
}
.stepper {
  flex: none;
  width: 27px;
  display: flex;
  flex-direction: column;
  align-items: center;
  justify-content: center;
  gap: 5px;
  border-right: 1px solid #5f5f5f;
  color: #e6e6e6;
}
.field {
  flex: 1;
  padding-left: 5px;
  line-height: 29px;
  background-color: #464646;
  color: #e2e2e2;
}
.c-fill { margin-left: 10px; width: 56px; }
.c-stroke { margin-left: 10px; width: 56px; }
.c-weight { margin-left: 9px; width: 122px; }
.c-dash { margin-left: 8px; width: 163px; }
.c-cap { margin-left: 8px; width: 158px; }
.c-opacity { margin-left: 9px; width: 104px; }
.c-style { margin-left: 10px; width: 57px; }
.c-label {
  flex: none;
  color: #e4e4e4;
  white-space: nowrap;
  border-bottom: 1px dotted #c8c8c8;
  line-height: 16px;
}
.c-plain {
  flex: none;
  color: #b0b0b0;
}
.l-stroke { margin-left: 19px; width: 47px; }
.l-opacity { margin-left: 12px; width: 53px; }
.l-style { margin-left: 8px; width: 36px; }
.l-char { margin-left: 12px; width: 64px; }
.l-para { margin-left: 11px; width: 71px; }
.align-group {
  flex: none;
  margin: -3px 0 0 10px;
  width: 110px;
  height: 36px;
  display: flex;
  border: 1px solid #5f5f5f;
  border-radius: 4px;
}
.align-btn {
  flex: 1;
  display: flex;
  align-items: center;
  justify-content: center;
  border-left: 1px solid #5f5f5f;
}
.align-btn.on {
  border-left: none;
  background-color: #2f2f2f;
  border-radius: 4px 0 0 4px;
}
.text-btn {
  flex: none;
  height: 28px;
  line-height: 26px;
  text-align: center;
  border: 1px solid #767676;
  border-radius: 3px;
  color: #f0f0f0;
}
.b-doc { margin-left: 9px; width: 138px; }
.b-pref { margin-left: 8px; width: 106px; }
.isolate-ic { margin: -3px 0 0 16px; }
.iso-chev { margin: -3px 0 0 7px; color: #d8d8d8; }
.grid-ic { margin: -3px 0 0 57px; }
.snap-btn {
  flex: none;
  margin: -3px 0 0 11px;
  width: 35px;
  height: 35px;
  display: flex;
  align-items: center;
  justify-content: center;
  background-color: #303030;
  border-radius: 3px;
}
.snap-chev { margin: -3px 0 0 4px; color: #d8d8d8; }
.list-ic { margin: -3px 0 0 30px; }

/* main area */
.workspace {
  flex: 1;
  min-height: 0;
  display: flex;
}
.toolbar {
  flex: none;
  width: 110px;
  padding-right: 2px;
  border-right: 3px solid #3a3a3a;
  background-color: #535353;
}
.dock-head {
  height: 17px;
  display: flex;
  align-items: center;
  padding-left: 10px;
  background-color: #474747;
  border-bottom: 1px solid #3d3d3d;
  color: #c0c0c0;
}
.grip {
  width: 22px;
  height: 5px;
  margin: 5px auto 0;
  background: repeating-linear-gradient(to right, #3c3c3c 0 1px, transparent 1px 3px);
}

.tgroup {
  width: 92px;
  margin-left: 9px;
  display: grid;
  grid-template-columns: 46px 46px;
  grid-auto-rows: 36px;
  border-bottom: 1px solid #474747;
}
.g1 { grid-auto-rows: 35px; padding: 19px 0 3px; }
.g2 { padding: 2px 0 3px; }
.g3 { padding: 3px 0 3px; }
.g4 { padding: 5px 0 2px; }
.g5 { padding: 3px 0 4px; }
.g6 { padding: 2px 0 4px; }
.tool {
  position: relative;
  display: flex;
  align-items: center;
  justify-content: center;
}
.ic {
  fill: #c4c4c4;
}
.tool.more::after {
  content: "";
  position: absolute;
  right: 1px;
  bottom: 1px;
  border-style: solid;
  border-width: 0 0 5px 5px;
  border-color: transparent transparent #c4c4c4 transparent;
}
.tool.active {
  background-color: #2f2f2f;
  border-radius: 3px;
  margin: 1px 2px;
}
.type-t {
  font-family: "Liberation Serif", serif;
  font-size: 30px;
  line-height: 1;
  color: #d0d0d0;
}

.colors {
  position: relative;
  height: 87px;
  margin-top: 3px;
}
.fill-big {
  position: absolute;
  left: 10px;
  top: 4px;
  width: 54px;
  height: 54px;
  background-color: #fff;
  border: 1px solid #333;
}
.stroke-big {
  position: absolute;
  left: 37px;
  top: 31px;
  width: 54px;
  height: 54px;
  background-color: #000;
  border: 1px solid #fff;
  padding: 13px;
}
.stroke-big span {
  display: block;
  width: 26px;
  height: 26px;
  background-color: #535353;
  border: 1px solid #fff;
}
.swap-ic {
  position: absolute;
  left: 77px;
  top: 6px;
}
.default-ic {
  position: absolute;
  left: 10px;
  top: 66px;
  width: 19px;
  height: 18px;
}
.default-ic span {
  position: absolute;
  width: 12px;
  height: 12px;
  border: 1px solid #ddd;
}
.default-ic span:first-child {
  right: 0;
  bottom: 0;
  background-color: #000;
}
.default-ic span:last-child {
  left: 1px;
  top: 1px;
  background-color: #fff;
  border-color: #333;
}
.mode-row {
  width: 88px;
  height: 30px;
  margin: 7px 0 0 10px;
  display: flex;
  background-color: #4e4e4e;
  border-radius: 4px;
}
.mode {
  flex: 1;
  display: flex;
  align-items: center;
  justify-content: center;
  border-left: 1px solid #5f5f5f;
}
.mode.on {
  border-left: none;
  background-color: #333;
  border-radius: 4px 0 0 4px;
}
.mode-sw {
  width: 20px;
  height: 20px;
  border: 2px solid #000;
}
.mode-sw.solid { background-color: #fff; }
.mode-sw.grad { background: linear-gradient(to right, #fff, #333); }
.mode-sw.none { background: linear-gradient(135deg, #fff 0 36%, #f00 36% 64%, #fff 64%); }
.screen-mode {
  margin: 10px 0 0 38px;
}

/* documents */
.docarea {
  flex: 1;
  min-width: 0;
  display: flex;
  flex-direction: column;
}
.tabs {
  flex: none;
  height: 43px;
  display: flex;
  background-color: #424242;
}
.tab {
  flex: none;
  width: 324px;
  padding: 2px 16px 0;
  display: flex;
  align-items: center;
  justify-content: space-between;
  border-right: 1px solid #383838;
  color: #a4a4a4;
  font-size: 16px;
  font-weight: 600;
  white-space: nowrap;
}
.tab svg {
  margin-top: -5px;
  color: #c4c4c4;
}
.tab.current {
  width: 332px;
  background-color: #535353;
  border-right: none;
  color: #f2f2f2;
}
.canvas-row {
  flex: 1;
  min-height: 0;
  display: flex;
}
.canvas {
  flex: 1;
  padding: 57px 0 0 495px;
  background-color: #5f5f5f;
}
.artboard {
  background-color: #fff;
  outline: 1px solid #000;
  outline-offset: -1px;
}
.vscroll {
  flex: none;
  width: 25px;
  padding-top: 10px;
  display: flex;
  flex-direction: column;
  align-items: center;
  background-color: #4b4b4b;
  color: #8e8e8e;
}
.vthumb {
  width: 25px;
  height: 37px;
  margin-top: 429px;
  background-color: #5f5f5f;
  border-radius: 10px;
}
.vdown {
  margin-top: 415px;
}

/* artboard artwork */
.brown { fill: #42210b; }
.brown-line { fill: none; stroke: #42210b; stroke-width: 5.500px; stroke-linejoin: round; }
.brown-line circle { stroke-width: 6.500px; }
.brown-line .loop-arc { stroke-width: 7px; }
.dark-stroke { fill: none; stroke: #4e1a00; stroke-width: 5px; }
.dark-fill { fill: #4e1a00; }
.dark-line { fill: none; stroke: #4e1a00; stroke-width: 4.500px; }
.dark-line-w { fill: none; stroke: #4e1a00; stroke-width: 4.500px; stroke-linejoin: round; }
.dark-thin { fill: #fff; stroke: #4e1a00; stroke-width: 2.500px; }
.lbl {
  font-family: Lato, "Open Sans", sans-serif;
  font-weight: 300;
  font-size: 19px;
  fill: #42210b;
}
.lbl-small {
  font-family: Lato, "Open Sans", sans-serif;
  font-size: 14px;
  fill: #5b3c26;
}
.logo-name {
  font-family: Lato, "Open Sans", sans-serif;
  font-weight: 300;
  font-size: 36px;
  fill: #fff;
}
.badge-num {
  font-family: Lato, "Open Sans", sans-serif;
  font-size: 34px;
  text-anchor: middle;
  fill: #fff;
  stroke: #4e1a00;
  stroke-width: 1px;
}

/* status bar */
.statusbar {
  flex: none;
  height: 24px;
  display: flex;
  overflow: hidden;
  font-size: 15px;
}
.st-left {
  flex: none;
  width: 650px;
  display: flex;
  align-items: flex-start;
  background-color: #535353;
}
.st-field {
  flex: none;
  height: 30px;
  margin-top: 1px;
  display: flex;
  background-color: #4e4e4e;
  border: 1px solid #5f5f5f;
  border-radius: 3px;
  color: #e6e6e6;
}
.st-field span {
  flex: 1;
  padding: 3px 0 0 4px;
  background-color: #464646;
}
.st-field svg {
  margin: 9px 7px 0;
}
.st-zoom { margin-left: 7px; width: 103px; }
.st-page { margin-left: -13px; width: 87px; }
.st-nav { margin: 5px 0 0 15px; }
.st-nav-r { margin: 5px 0 0 15px; }
.st-info {
  flex: none;
  width: 307px;
  margin-left: 13px;
  height: 100%;
  padding: 3px 16px 0 0;
  text-align: center;
  border-left: 1px solid #4a4a4a;
  color: #a8a8a8;
}
.st-play {
  margin-top: 4px;
}
.hscroll {
  flex: 1;
  padding: 0 10px;
  display: flex;
  align-items: center;
  justify-content: space-between;
  background-color: #4b4b4b;
  position: relative;
}
.hthumb {
  position: absolute;
  left: 496px;
  top: 2px;
  width: 38px;
  height: 24px;
  background-color: #5f5f5f;
  border-radius: 10px;
}
.st-corner {
  flex: none;
  width: 25px;
  background-color: #535353;
}

/* right dock */
.dock {
  flex: none;
  width: 119px;
  display: flex;
  gap: 3px;
  padding-left: 2px;
  background-color: #3f3f3f;
}
.dock-col {
  flex: 1;
  background-color: #535353;
}
.dock-col .dock-head {
  padding-left: 37px;
  margin-bottom: 1px;
}
.pgroup {
  padding: 5px 0;
  border-bottom: 1px solid #3b3b3b;
}
.pgrip {
  width: 28px;
  height: 5px;
  margin: 0 auto 4px;
  background: repeating-linear-gradient(to right, #3c3c3c 0 1px, transparent 1px 3px);
}
.panel-ic {
  height: 42px;
  padding-left: 2px;
  display: flex;
  align-items: center;
  justify-content: center;
}
```
